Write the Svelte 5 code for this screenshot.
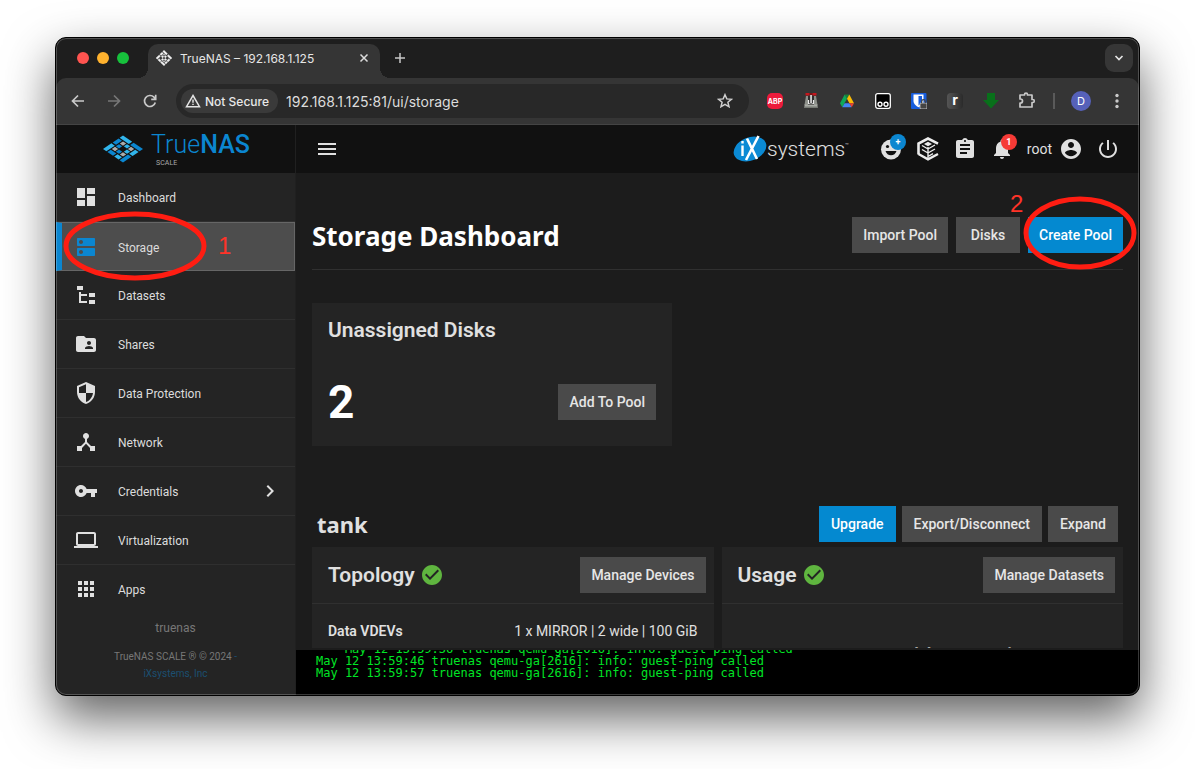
<script>
  const nav = [
    { label: 'Dashboard', d: 'M3 13h8V3H3v10zm0 8h8v-6H3v6zm10 0h8V11h-8v10zm0-18v6h8V3h-8z' },
    { label: 'Storage', active: true, d: 'M20 13H4c-.55 0-1 .45-1 1v6c0 .55.45 1 1 1h16c.55 0 1-.45 1-1v-6c0-.55-.45-1-1-1zM7 19c-1.1 0-2-.9-2-2s.9-2 2-2 2 .9 2 2-.9 2-2 2zM20 3H4c-.55 0-1 .45-1 1v6c0 .55.45 1 1 1h16c.55 0 1-.45 1-1V4c0-.55-.45-1-1-1zM7 9c-1.1 0-2-.9-2-2s.9-2 2-2 2 .9 2 2-.9 2-2 2z' },
    { label: 'Datasets', d: 'M3 3h6v4H3V3m12 7h6v4h-6v-4m0 7h6v4h-6v-4m-2-4H7v5h6v2H5V9h2v2h6v2z' },
    { label: 'Shares', d: 'M20 6h-8l-2-2H4c-1.1 0-1.99.9-1.99 2L2 18c0 1.1.9 2 2 2h16c1.1 0 2-.9 2-2V8c0-1.1-.9-2-2-2zm-5 3c1.1 0 2 .9 2 2s-.9 2-2 2-2-.9-2-2 .9-2 2-2zm4 8h-8v-1c0-1.33 2.67-2 4-2s4 .67 4 2v1z' },
    { label: 'Data Protection', d: 'M12 1L3 5v6c0 5.55 3.84 10.74 9 12 5.16-1.26 9-6.45 9-12V5l-9-4zm0 10.99h7c-.53 4.12-3.28 7.79-7 8.94V12H5V6.3l7-3.11v8.8z' },
    { label: 'Network', d: 'M17 16l-4-4V8.82C14.16 8.4 15 7.3 15 6c0-1.66-1.34-3-3-3S9 4.34 9 6c0 1.3.84 2.4 2 2.82V12l-4 4H3v5h5v-3.05l4-4.2 4 4.2V21h5v-5h-4z' },
    { label: 'Credentials', more: true, d: 'M12.65 10C11.83 7.67 9.61 6 7 6c-3.31 0-6 2.69-6 6s2.69 6 6 6c2.61 0 4.83-1.67 5.65-4H17v4h4v-4h2v-4H12.65zM7 14c-1.1 0-2-.9-2-2s.9-2 2-2 2 .9 2 2-.9 2-2 2z' },
    { label: 'Virtualization', d: 'M20 18c1.1 0 1.99-.9 1.99-2L22 6c0-1.1-.9-2-2-2H4c-1.1 0-2 .9-2 2v10c0 1.1.9 2 2 2H0v2h24v-2h-4zM4 6h16v10H4V6z' },
    { label: 'Apps', d: 'M4 8h4V4H4v4zm6 12h4v-4h-4v4zm-6 0h4v-4H4v4zm0-6h4v-4H4v4zm6 0h4v-4h-4v4zm6-10v4h4V4h-4zm-6 4h4V4h-4v4zm6 6h4v-4h-4v4zm0 6h4v-4h-4v4z' },
  ];
  const chevron = 'M10 6L8.59 7.41 13.17 12l-4.58 4.59L10 18l6-6z';
  const check = 'M12 2C6.48 2 2 6.48 2 12s4.48 10 10 10 10-4.48 10-10S17.52 2 12 2zm-2 15l-5-5 1.41-1.41L10 14.17l7.59-7.59L19 8l-9 9z';
  const clipboard = 'M19 3h-4.18C14.4 1.84 13.3 1 12 1c-1.3 0-2.4.84-2.82 2H5c-1.1 0-2 .9-2 2v14c0 1.1.9 2 2 2h14c1.1 0 2-.9 2-2V5c0-1.1-.9-2-2-2zm-7 0c.55 0 1 .45 1 1s-.45 1-1 1-1-.45-1-1 .45-1 1-1zm2 14H7v-2h7v2zm3-4H7v-2h10v2zm0-4H7V7h10v2z';
  const bell = 'M12 22c1.1 0 2-.9 2-2h-4c0 1.1.89 2 2 2zm6-6v-5c0-3.07-1.64-5.64-4.5-6.32V4c0-.83-.67-1.5-1.5-1.5s-1.5.67-1.5 1.5v.68C7.63 5.36 6 7.92 6 11v5l-2 2v1h16v-1l-2-2z';
  const account = 'M12 2C6.48 2 2 6.48 2 12s4.48 10 10 10 10-4.48 10-10S17.52 2 12 2zm0 3c1.66 0 3 1.34 3 3s-1.34 3-3 3-3-1.34-3-3 1.34-3 3-3zm0 14.2c-2.5 0-4.71-1.28-6-3.22.03-1.99 4-3.08 6-3.08 1.99 0 5.97 1.09 6 3.08-1.29 1.94-3.5 3.22-6 3.22z';
  const power = 'M13 3h-2v10h2V3zm4.83 2.17l-1.42 1.42C17.99 7.86 19 9.81 19 12c0 3.87-3.13 7-7 7s-7-3.13-7-7c0-2.19 1.01-4.14 2.58-5.42L6.17 5.17C4.23 6.82 3 9.26 3 12c0 4.97 4.03 9 9 9s9-4.03 9-9c0-2.74-1.23-5.18-3.17-6.83z';

  // Tiles of the isometric logo: x, y, width, height, tone
  const tiles = [
    [0, 0, 2.3, 0.85, 'l'], [2.65, 0, 2.35, 0.85, 'd'],
    [0, 1.1, 0.85, 1.5, 'd'], [2.1, 1.1, 0.8, 0.8, 'l'], [4.15, 1.1, 0.85, 1.5, 'l'],
    [1.1, 2.1, 0.8, 0.8, 'd'], [3.1, 2.1, 0.8, 0.8, 'l'],
    [0, 2.9, 0.85, 2.1, 'l'], [2.1, 3.1, 0.8, 0.8, 'd'], [4.15, 2.9, 0.85, 2.1, 'd'],
    [1.1, 4.15, 1.4, 0.85, 'd'], [2.8, 4.15, 1.1, 0.85, 'l'],
    [1.1, 1.1, 0.8, 0.8, 'g'], [3.1, 1.1, 0.8, 0.8, 'g'], [1.1, 3.1, 0.8, 0.8, 'g'], [3.1, 3.1, 0.8, 0.8, 'g'],
  ];
  const tone = { l: '#31b5ec', d: '#0b86d0', g: '#aaacae' };
  let url = $state('192.168.1.125:81/ui/storage');
</script>

{#snippet icon(d)}
  <svg width="24" height="24" viewBox="0 0 24 24" fill="currentColor" aria-hidden="true"><path {d} /></svg>
{/snippet}

<div class="desktop">
  <div class="window">
    <div class="tabs">
      <div class="lights">
        <button class="red" aria-label="Close window"></button>
        <button class="amber" aria-label="Minimize window"></button>
        <button class="green" aria-label="Zoom window"></button>
      </div>
      <div class="tab">
        <svg width="16" height="16" viewBox="0 0 16 16" aria-hidden="true">
          <g transform="matrix(1.6 1.55 -1.6 1.55 8 0.3)">
            <path d="M0 0h2.200v.8H0zM2.800 0H5v.8H2.800zM0 1.200h.8v1.400H0zM0 3h.8v2H0zM1.200 4.200h1.300V5H1.200zM2.800 4.200H5V5H2.800zM4.200 1.200H5v1.300h-.8zM4.200 2.800H5v1h-.8zM2.100 1.200h.8v.8h-.8zM2.100 3h.8v.8h-.8zM1.200 2.100H2v.8h-.8zM3 2.100h.8v.8H3zM1.200 1.200h.5v.5h-.5zM3.300 3.300h.5v.5h-.5z" fill="#f0f0f0" stroke="#f0f0f0" stroke-width=".15" />
          </g>
        </svg>
        <span class="tab-title">TrueNAS – 192.168.1.125</span>
        <button class="plain" aria-label="Close tab">
          <svg width="10" height="10" viewBox="0 0 10 10" stroke="#dcdcdc" stroke-width="1.5"><path d="M1.500 1.500l7 7M8.500 1.500l-7 7" /></svg>
        </button>
      </div>
      <button class="plain newtab" aria-label="New tab">
        <svg width="12" height="12" viewBox="0 0 12 12" stroke="#c8c8c8" stroke-width="1.5"><path d="M6 1v10M1 6h10" /></svg>
      </button>
      <button class="tabsearch" aria-label="Search tabs">
        <svg width="10" height="10" viewBox="0 0 10 10" fill="none" stroke="#e4e4e4" stroke-width="1.7"><path d="M1.500 3l3.500 3.500L8.500 3" /></svg>
      </button>
    </div>

    <div class="toolbar">
      <button class="cell" aria-label="Back">
        <svg width="16" height="16" viewBox="0 0 16 16" fill="none" stroke="#c9c9c9" stroke-width="1.7"><path d="M14 8H3M8 2.500L2.500 8 8 13.500" /></svg>
      </button>
      <button class="cell" aria-label="Forward">
        <svg width="16" height="16" viewBox="0 0 16 16" fill="none" stroke="#777" stroke-width="1.7"><path d="M2 8h11M8 2.500L13.500 8 8 13.500" /></svg>
      </button>
      <button class="cell" aria-label="Reload">
        <svg width="16" height="16" viewBox="0 0 16 16" fill="none" stroke="#c9c9c9" stroke-width="1.7"><path d="M13.300 9.500A5.500 5.500 0 1 1 12 4.200L13.500 6M13.700 1.800v4.500H9.200" /></svg>
      </button>
      <div class="urlbar">
        <button class="chip">
          <svg width="16" height="14" viewBox="0 0 16 14" fill="none" stroke="#e3e3e3" stroke-width="1.5"><path d="M8 1.500L14.500 12.700h-13zM8 5.500v3.300M8 9.700v1.400" /></svg>
          Not Secure
        </button>
        <input aria-label="Address" bind:value={url} />
        <button class="plain star" aria-label="Bookmark">
          <svg width="16" height="16" viewBox="0 0 16 16" fill="none" stroke="#cfcfcf" stroke-width="1.5"><path d="M8 1.700l1.800 4.200 4.600.4-3.500 3 1.100 4.500L8 11.400l-4 2.400 1.100-4.500-3.500-3 4.600-.4z" /></svg>
        </button>
      </div>
      <button class="cell" aria-label="Ad blocker"><span class="abp">ABP</span></button>
      <button class="cell" aria-label="Joystick">
        <svg width="16" height="16" viewBox="0 0 16 16"><path d="M3 3h10l1.500 9h-13z" fill="#8c8f89" /><path d="M1.500 11.500h13V15h-13z" fill="#a9aca6" /><path d="M1.500 13.500h13V15h-13z" fill="#777a74" /><path d="M5 3h6v8.500H5z" fill="#2e2e2e" /><path d="M7.300 2h1.500v8.500H7.300z" fill="#f1f1f1" /><path d="M5.500 7v3.500h1.200M10.500 7v3.500H9.300" fill="none" stroke="#e8e8e8" stroke-width="1.200" /><path d="M2.500 0h4.200v2.600H2.500zM9.300 0h4.200v2.600H9.300z" fill="#c5161c" /><path d="M6.700 0h2.600v2H6.700z" fill="#7e1014" /></svg>
      </button>
      <button class="cell" aria-label="Drive">
        <svg width="14" height="14" viewBox="0 0 14 14"><path d="M4.700 0.500h4.600L7 4.800z" fill="#188038" /><path d="M4.700 0.500L0 9.200l2.300 4L7 4.800z" fill="#0fa958" /><path d="M9.300 0.500L14 9.200H9.400L7 4.800z" fill="#fbbc04" /><path d="M2.300 13.200L4.600 9.200H9.400L11.700 13.200z" fill="#4285f4" /><path d="M9.400 9.200H14L11.700 13.200z" fill="#ea4335" /></svg>
      </button>
      <button class="cell" aria-label="Scripts">
        <svg width="16" height="16" viewBox="0 0 16 16"><rect x="0.700" y="0.700" width="14.600" height="14.600" rx="2" fill="#000" stroke="#fff" stroke-width="1.300" /><g fill="none" stroke="#fff" stroke-width="1.400"><circle cx="5" cy="11.200" r="2" /><circle cx="11" cy="11.200" r="2" /></g></svg>
      </button>
      <button class="cell" aria-label="Password manager">
        <svg width="16" height="16" viewBox="0 0 16 16"><rect width="15.500" height="16" rx="1" fill="#175ddc" /><path d="M2.500 1.500h10v6.500c0 3-2.800 5-5 6.200C5.300 13 2.500 11 2.500 8z" fill="#fff" /><path d="M7.500 3h3.500V8c0 2-1.800 3.500-3.500 4.500z" fill="#175ddc" /><rect x="9" y="10" width="7" height="6" rx="1" fill="#444" stroke="#d5d5d5" stroke-width=".8" /><path d="M10.700 10V8.500a1.800 1.800 0 0 1 3.600 0V10" fill="none" stroke="#444" stroke-width="1.300" /></svg>
      </button>
      <button class="cell" aria-label="Reader"><span class="reader">r</span></button>
      <button class="cell" aria-label="Downloads">
        <svg width="16" height="16" viewBox="0 0 16 16"><path d="M4 0h8v7h4l-8 8.500L0 7h4z" fill="#08701a" /></svg>
      </button>
      <button class="cell" aria-label="Extensions">
        <svg width="18" height="18" viewBox="0 0 18 18" fill="none" stroke="#c9c9c9" stroke-width="1.700" stroke-linejoin="round"><path d="M2 3h4.500V2.600a1.500 1.500 0 0 1 3 0V3H14v4.500h.8a1.500 1.500 0 0 1 0 3H14V15H2v-4h.5a2 2 0 0 0 0-4H2z" /></svg>
      </button>
      <span class="bar"></span>
      <button class="cell" aria-label="Profile"><span class="avatar">D</span></button>
      <button class="cell" aria-label="Menu">
        <svg width="4" height="16" viewBox="0 0 4 16" fill="#c9c9c9"><circle cx="2" cy="2.500" r="1.700" /><circle cx="2" cy="8" r="1.700" /><circle cx="2" cy="13.500" r="1.700" /></svg>
      </button>
    </div>

    <div class="app">
      <aside>
        <a class="brand" href="#home">
          <svg width="40" height="28" viewBox="0 0 40 28" aria-hidden="true">
            <g transform="matrix(4 2.7 -4 2.7 20 0.5)">
              {#each tiles as [x, y, w, h, t]}<rect {x} {y} width={w} height={h} fill={tone[t]} />{/each}
            </g>
          </svg>
          <span class="wordmark"><span class="name">True<b>NAS</b></span><small>SCALE</small></span>
        </a>
        <nav>
          {#each nav as item}
            <a class="item" class:active={item.active} href="#{item.label}">
              {@render icon(item.d)}
              <span class="label">{item.label}</span>
              {#if item.more}{@render icon(chevron)}{/if}
              {#if item.active}
                <svg class="ring one" viewBox="0 0 144 70" aria-hidden="true"><ellipse cx="72" cy="35" rx="69" ry="32" /></svg>
                <span class="step first">1</span>
              {/if}
            </a>
          {/each}
        </nav>
        <footer>
          <p class="host">truenas</p>
          <p>TrueNAS SCALE ® © 2024 <a href="#ix">-<br />iXsystems, Inc</a></p>
        </footer>
      </aside>

      <div class="body">
        <header>
          <button class="plain" aria-label="Toggle menu">
            <svg width="24" height="24" viewBox="0 0 24 24" fill="currentColor"><path d="M3 18h18v-2H3v2zm0-5h18v-2H3v2zm0-7v2h18V6H3z" /></svg>
          </button>
          <a class="ix" href="#ix">
            <svg width="34" height="28" viewBox="0 0 34 28" aria-hidden="true">
              <ellipse cx="17" cy="14" rx="17" ry="11.500" transform="rotate(-22 17 14)" fill="#0b8ad4" />
              <path d="M9.500 10.500V21M9.500 6v2.500" stroke="#fff" stroke-width="2.400" />
              <path d="M14 3.500L24 24M25.500 1L13 25" stroke="#fff" stroke-width="2.600" />
            </svg>
            <span>systems</span><sup>™</sup>
          </a>
          <button class="plain badged" aria-label="Feedback">
            <svg width="24" height="24" viewBox="0 0 24 24"><circle cx="12" cy="12.500" r="10" fill="#e0e0e0" /><circle cx="8.500" cy="9.500" r="1.600" fill="#111" /><circle cx="15.500" cy="9.500" r="1.600" fill="#111" /><path d="M6.500 14h11c-.8 2.700-2.900 4.300-5.500 4.300S7.300 16.700 6.500 14z" fill="#111" /></svg>
            <span class="badge blue">+</span>
          </button>
          <button class="plain" aria-label="TrueCommand">
            <svg width="24" height="24" viewBox="0 0 24 24" fill="none" stroke="#ececec"><path d="M2.500 17.500v-11L12 1.500l10 5.200" stroke-width="2.600" /><path d="M2.500 17l9.500 5.300 10-5.300" stroke-width="2.400" /><path d="M12 22V10M12 12L6 8.500M12 16l-6-3.500M12 12l7-4M12 16l7-4M12 19.500l5-2.800" stroke-width="1.400" /><path d="M8 7l4 2.300L16 7l-4-2.200z" fill="#ececec" stroke="none" /></svg>
          </button>
          <button class="plain" aria-label="Jobs">{@render icon(clipboard)}</button>
          <button class="plain badged" aria-label="Alerts">{@render icon(bell)}<span class="badge alert">1</span></button>
          <button class="plain user">root {@render icon(account)}</button>
          <button class="plain" aria-label="Power">{@render icon(power)}</button>
        </header>

        <main>
          <div class="pagehead">
            <h1>Storage Dashboard</h1>
            <button class="btn">Import Pool</button>
            <button class="btn">Disks</button>
            <button class="btn primary marked">
              Create Pool
              <svg class="ring two" viewBox="0 0 114 74" aria-hidden="true"><ellipse cx="57" cy="37" rx="54" ry="34" /></svg>
              <span class="step second">2</span>
            </button>
          </div>

          <section class="card unassigned">
            <h2>Unassigned Disks</h2>
            <div class="count"><strong>2</strong><button class="btn">Add To Pool</button></div>
          </section>

          <div class="poolhead">
            <h2>tank</h2>
            <button class="btn primary">Upgrade</button>
            <button class="btn">Export/Disconnect</button>
            <button class="btn">Expand</button>
          </div>
          <div class="pool">
            <section class="card">
              <div class="cardhead">
                <h3>Topology</h3><span class="ok">{@render icon(check)}</span>
                <button class="btn">Manage Devices</button>
              </div>
              <div class="row"><b>Data VDEVs</b><span>1 x MIRROR | 2 wide | 100 GiB</span></div>
            </section>
            <section class="card">
              <div class="cardhead">
                <h3>Usage</h3><span class="ok">{@render icon(check)}</span>
                <button class="btn">Manage Datasets</button>
              </div>
              <p class="capacity">Usable Capacity</p>
            </section>
          </div>
        </main>

        <pre class="console"><span>    May 12 13:59:36 truenas qemu-ga[2616]: info: guest-ping called</span><span>May 12 13:59:46 truenas qemu-ga[2616]: info: guest-ping called</span><span>May 12 13:59:57 truenas qemu-ga[2616]: info: guest-ping called</span></pre>
      </div>
    </div>
  </div>
</div>

<style>
  :global(body) { margin: 0; background: #fff; }
  * { box-sizing: border-box; }
  h1, h2, h3, p, pre { margin: 0; }
  button { font: inherit; color: inherit; border: 0; margin: 0; }
  a { color: inherit; text-decoration: none; }
  svg { display: block; flex: none; }

  .desktop {
    height: 100vh;
    padding: 37px 55px 73px;
    overflow: hidden;
    font-family: Roboto, "Open Sans", sans-serif;
    color: #e0e0e0;
  }
  .window {
    position: relative;
    height: 100%;
    display: flex;
    flex-direction: column;
    border: 1px solid #000;
    border-radius: 11px;
    overflow: hidden;
    background: #1e1e1e;
    box-shadow: 0 22px 50px rgba(0, 0, 0, 0.62);
  }
  .window::after {
    content: "";
    position: absolute;
    inset: 0;
    border-radius: 10px;
    box-shadow: inset 0 0 0 1px rgba(255, 255, 255, 0.22);
    pointer-events: none;
  }

  .plain { display: flex; padding: 0; background: none; align-items: center; }
  .tabs {
    display: flex;
    align-items: center;
    flex: none;
    height: 40px;
    padding: 0 6px 0 21px;
    font-family: Inter, sans-serif;
  }
  .lights { display: flex; gap: 8px; margin-right: 19px; }
  .lights button { width: 12px; height: 12px; padding: 0; border-radius: 50%; }
  .red { background: #ff5450; }
  .amber { background: #ffb22e; }
  .green { background: #17c13c; }
  .tab {
    position: relative;
    display: flex;
    align-items: center;
    align-self: flex-end;
    width: 232px;
    height: 34px;
    padding: 0 11px 6px 8px;
    gap: 8px;
    border-radius: 10px 10px 0 0;
    background: #353535;
    font-size: 12px;
    color: #e6e6e6;
  }
  .tab::before, .tab::after {
    content: "";
    position: absolute;
    bottom: 0;
    width: 10px;
    height: 10px;
  }
  .tab::before { left: -10px; background: radial-gradient(circle at 0 0, transparent 10px, #353535 10px); }
  .tab::after { right: -10px; background: radial-gradient(circle at 100% 0, transparent 10px, #353535 10px); }
  .tab-title { flex: 1; white-space: nowrap; }
  .newtab { margin-left: 14px; }
  .tabsearch {
    display: flex;
    align-items: center;
    justify-content: center;
    width: 28px;
    height: 28px;
    margin-left: auto;
    padding: 0;
    border-radius: 9px;
    background: #363636;
  }

  .toolbar {
    display: flex;
    align-items: center;
    flex: none;
    height: 47px;
    padding: 0 4px;
    background: #353535;
    border-radius: 10px 10px 0 0;
    border-bottom: 1px solid #444;
    font-family: Inter, sans-serif;
  }
  .cell {
    display: flex;
    align-items: center;
    justify-content: center;
    width: 36px;
    height: 36px;
    padding: 0;
    background: none;
  }
  .urlbar {
    display: flex;
    align-items: center;
    flex: 1;
    min-width: 0;
    height: 34px;
    margin: 0 8px;
    padding: 0 16px 0 5px;
    gap: 8px;
    border-radius: 17px;
    background: #282828;
  }
  .chip {
    display: flex;
    align-items: center;
    flex: none;
    gap: 4px;
    height: 24px;
    padding: 0 9px 0 4px;
    border-radius: 12px;
    background: #3a3a3a;
    font-size: 12px;
    font-weight: 500;
    color: #e8e8e8;
  }
  .urlbar input {
    flex: 1;
    min-width: 0;
    padding: 0;
    border: 0;
    outline: 0;
    background: none;
    font: 14px Inter, sans-serif;
    color: #dcdcdc;
  }
  .abp {
    display: flex;
    align-items: center;
    justify-content: center;
    width: 16px;
    height: 16px;
    border-radius: 5px;
    background: #ed1b3b;
    font-size: 7px;
    font-weight: 700;
    color: #fff;
  }
  .reader {
    width: 16px;
    height: 16px;
    border-radius: 4px;
    background: linear-gradient(90deg, #555, #2b2b2b);
    font: 700 14px/14px Inter, sans-serif;
    color: #fff;
  }
  .bar { width: 2px; height: 16px; margin: 0 8px; background: #5a5a5a; }
  .avatar {
    width: 20px;
    height: 20px;
    border-radius: 50%;
    background: #5661b9;
    font-size: 11px;
    line-height: 20px;
    color: #fff;
  }

  .app { display: flex; flex: 1; min-height: 0; }
  aside { flex: none; width: 240px; border-right: 1px solid #202020; background: #242424; }
  .brand {
    display: flex;
    align-items: center;
    justify-content: center;
    gap: 8px;
    height: 48px;
    padding-left: 2px;
    background: #111;
  }
  .wordmark { display: flex; flex-direction: column; }
  .name { font-size: 25px; line-height: 28px; font-weight: 300; color: #0b86d0; }
  .name b { font-weight: 500; }
  .wordmark small { padding-left: 5px; font-size: 7px; line-height: 8px; color: #aaa; }
  .item {
    position: relative;
    display: flex;
    align-items: center;
    gap: 20px;
    height: 49px;
    padding: 0 13px 0 18px;
    border-bottom: 1px solid #2f2f2f;
    font-size: 12px;
    color: #dcdcdc;
  }
  .item:last-child { border-bottom-color: transparent; }
  .item svg { color: #e0e0e0; }
  .label { flex: 1; padding-top: 2px; }
  .item.active {
    padding-left: 12px;
    border: 1px solid #666;
    border-left: 6px solid #0b86d0;
    background: #4d4d4d;
  }
  .item.active > svg:first-child { color: #0b86d0; }
  footer { padding-top: 6px; text-align: center; font-size: 10px; line-height: 17px; color: #777; }
  .host { margin-bottom: 11px; font-size: 12px; }
  footer a { color: #1b4f70; }

  .ring { position: absolute; fill: none; stroke: #ff1d12; stroke-width: 5px; z-index: 2; pointer-events: none; }
  .one { left: 1px; top: -12px; width: 144px; height: 70px; }
  .two { left: -5px; top: -21px; width: 114px; height: 74px; }
  .step { position: absolute; font: 24px/28px "Liberation Sans", Arial, sans-serif; color: #ff3328; }
  .first { left: 156px; top: 9px; }
  .second { left: -18px; top: -27px; }

  .body { display: flex; flex-direction: column; flex: 1; min-width: 0; background: #1c1c1c; }
  header {
    display: flex;
    align-items: center;
    flex: none;
    gap: 13px;
    height: 48px;
    padding: 0 19px;
    background: #111;
  }
  .ix { display: flex; align-items: center; margin: 0 17px 0 auto; color: #e0e0e0; font-size: 21px; font-weight: 300; }
  .ix sup { align-self: flex-start; padding-top: 1px; font-size: 6px; line-height: 18px; vertical-align: baseline; }
  .badged { position: relative; }
  .badge {
    position: absolute;
    right: -3px;
    top: -3px;
    width: 16px;
    height: 16px;
    border-radius: 50%;
    font-size: 9px;
    font-weight: 700;
    line-height: 16px;
    text-align: center;
    color: #fff;
  }
  .blue { background: #0b86d0; }
  .alert { background: #f63a36; }
  .user { gap: 7px; font-size: 14px; }

  main { flex: 1; min-height: 0; overflow: hidden; padding: 44px 16px 0; border-bottom: 2px solid #1c1c1c; }
  .btn {
    flex: none;
    min-width: 64px;
    height: 36px;
    padding: 0 11px;
    background: #4a4a4a;
    font-size: 14px;
    font-weight: 500;
    color: #e6e6e6;
  }
  .btn.primary { background: #0489d0; color: #fff; }
  .marked { position: relative; }
  .pagehead {
    display: flex;
    gap: 8px;
    padding-bottom: 14px;
    border-bottom: 1px solid #303030;
  }
  h1 { flex: 1; font: 700 26px/38px "Noto Sans", sans-serif; color: #fff; }
  .card { background: #242424; }
  .unassigned { width: 360px; margin-top: 33px; padding: 15px 16px 26px; }
  h2, h3 { font-size: 21px; line-height: 24px; font-weight: 600; color: #e0e0e0; }
  .count { display: flex; align-items: center; justify-content: space-between; margin-top: 42px; }
  strong { font: 700 46px/36px Roboto, sans-serif; color: #fff; }
  .poolhead { display: flex; align-items: center; gap: 6px; margin-top: 60px; padding: 0 5px 5px; }
  .poolhead h2 { flex: 1; font: 700 22px/36px "Noto Sans", sans-serif; }
  .pool { display: grid; grid-template-columns: 1fr 1fr; gap: 8px; }
  .cardhead {
    display: flex;
    align-items: center;
    gap: 5px;
    height: 57px;
    padding: 0 8px 0 16px;
    border-bottom: 1px solid #303030;
  }
  .cardhead .btn { margin-left: auto; }
  .ok { color: #5fb53f; }
  .poolhead .btn { padding: 0 12px; }
  .row { display: flex; justify-content: space-between; padding: 17px 16px; font-size: 14px; line-height: 20px; }
  .row b { font-weight: 600; }
  .capacity { padding: 39px 0 0 156px; font: 600 20px/24px "Open Sans", sans-serif; color: #aaa; }

  .console {
    display: flex;
    flex-direction: column;
    justify-content: flex-end;
    flex: none;
    height: 45px;
    padding: 0 20px 16px;
    overflow: hidden;
    background: #000;
    font: 12px/12px "DejaVu Sans Mono", monospace;
    color: #00e526;
  }
</style>
